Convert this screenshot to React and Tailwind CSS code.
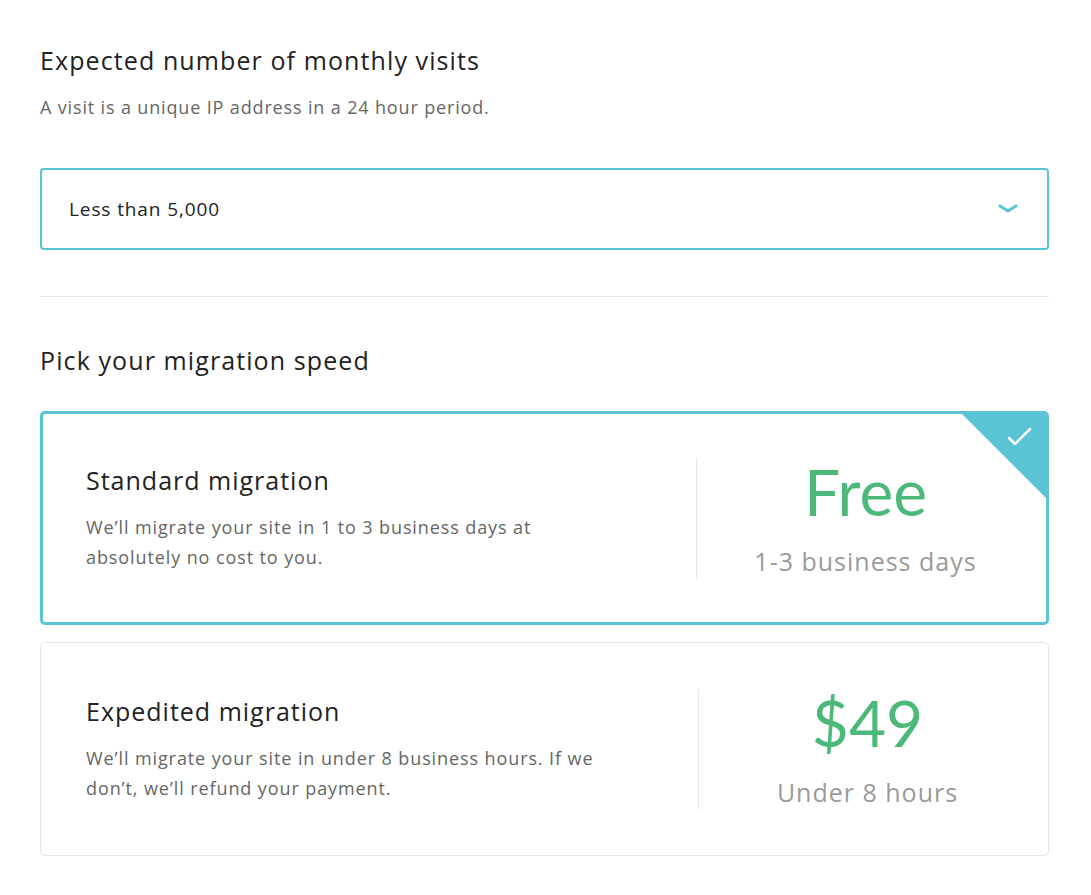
import React from 'react';

const Option = ({ selected, title, lines, price, sub }) => (
  <div
    className={
      'relative flex items-center h-[214px] rounded-[5px] overflow-hidden bg-white ' +
      (selected ? 'border-[3px] border-[#5ac4d6] pl-[43px]' : 'border border-[#e6e6e6] pl-[45px]')
    }
  >
    {selected && (
      <div className="absolute top-0 right-0 w-[84px] h-[84px]">
        <svg width="84" height="84" viewBox="0 0 84 84" className="block">
          <polygon points="0,0 84,0 84,84" fill="#5ac4d6" />
          <path d="M47 24 L53 30 L68 15" fill="none" stroke="#fff" strokeWidth="2.5" strokeLinecap="round" strokeLinejoin="round" />
        </svg>
      </div>
    )}
    <div className="flex-1">
      <h3 className="text-[25px] leading-[32px] tracking-[1px] text-[#222]">{title}</h3>
      <p className="mt-[16px] text-[18px] leading-[30px] tracking-[0.9px] text-[#666]">
        {lines[0]}
        <br />
        {lines[1]}
      </p>
    </div>
    <div className="w-px h-[121px] bg-[#e8e8e8]" />
    <div className="w-[337px] mr-[12px] text-center">
      <div className="font-['Lato',sans-serif] text-[64px] leading-[64px] text-[#4cb97a]">{price}</div>
      <div className="mt-[21px] text-[25px] leading-[32px] tracking-[1px] text-[#9a9a9a]">{sub}</div>
    </div>
  </div>
);

export default function App() {
  return (
    <div className="min-h-screen bg-white pl-[40px] pr-[42px] pt-[44px] pb-10 font-['Open_Sans','Lato',sans-serif]">
      <h1 className="text-[25px] leading-[32px] tracking-[1.1px] text-[#222]">Expected number of monthly visits</h1>
      <p className="mt-[17px] text-[18px] leading-[28px] tracking-[0.85px] text-[#666]">
        A visit is a unique IP address in a 24 hour period.
      </p>

      <div className="mt-[47px] h-[82px] border-2 border-[#5ac4d6] rounded-[4px] flex items-center justify-between pl-[27px] pr-[28px]">
        <span className="text-[19px] tracking-[0.9px] text-[#222]">Less than 5,000</span>
        <svg width="22" height="12" viewBox="0 0 22 12">
          <path d="M3 3 L11 8 L19 3" fill="none" stroke="#5ac4d6" strokeWidth="3" strokeLinecap="round" strokeLinejoin="round" />
        </svg>
      </div>

      <div className="mt-[46px] h-px bg-[#e6e6e6]" />

      <h2 className="mt-[47px] text-[25px] leading-[32px] tracking-[1.1px] text-[#222]">Pick your migration speed</h2>

      <div className="mt-[35px] flex flex-col gap-[17px]">
        <Option
          selected
          title="Standard migration"
          lines={['We’ll migrate your site in 1 to 3 business days at', 'absolutely no cost to you.']}
          price="Free"
          sub="1-3 business days"
        />
        <Option
          title="Expedited migration"
          lines={['We’ll migrate your site in under 8 business hours. If we', 'don’t, we’ll refund your payment.']}
          price="$49"
          sub="Under 8 hours"
        />
      </div>
    </div>
  );
}
